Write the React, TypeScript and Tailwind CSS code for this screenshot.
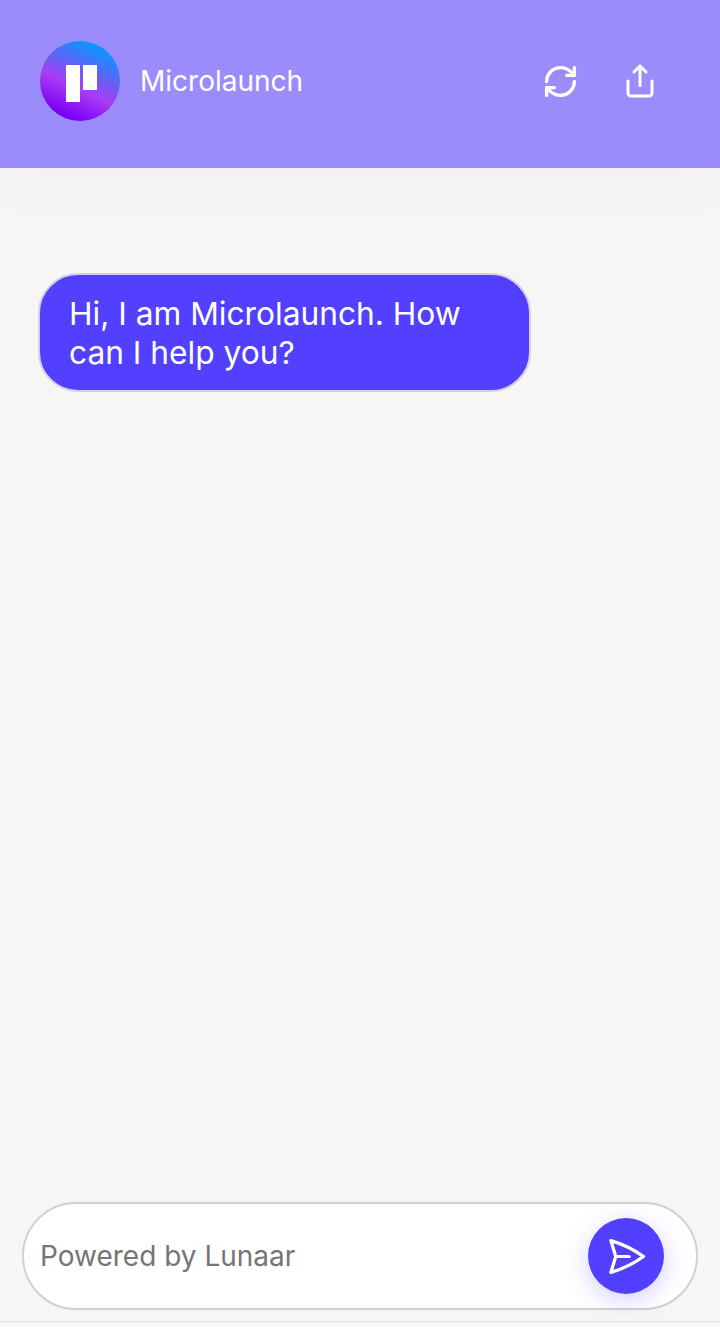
import { Share, RefreshCw } from "lucide-react";

function Logo() {
  return (
    <div className="flex h-20 w-20 shrink-0 items-start gap-[3px] rounded-full bg-[linear-gradient(205deg,#0f93ff_15%,#5568f6_35%,#a93cf4_57%,#7a00f5_85%)] pl-[26px] pt-[24px]">
      <div className="h-[37px] w-[14px] bg-white" />
      <div className="h-[25px] w-[14px] bg-white" />
    </div>
  );
}

function PlaneIcon() {
  return (
    <svg
      width="43"
      height="43"
      viewBox="0 0 24 24"
      fill="none"
      stroke="currentColor"
      strokeWidth="1.8"
      strokeLinecap="round"
      strokeLinejoin="round"
    >
      <path d="M6 12 3.269 3.125A59.769 59.769 0 0 1 21.485 12 59.768 59.768 0 0 1 3.27 20.875L5.999 12Zm0 0h7.5" />
    </svg>
  );
}

export default function App() {
  return (
    <div className="flex h-[1327px] w-[720px] flex-col overflow-hidden bg-[#f7f6f5] font-['Inter',sans-serif]">
      <header className="flex h-[168px] shrink-0 items-center justify-between bg-[#9b8cfb] pb-[6px] pl-10 pr-[60px] shadow-[0_14px_40px_rgba(155,140,251,0.06)]">
        <div className="flex items-center gap-5">
          <Logo />
          <span className="text-[28px] text-white">Microlaunch</span>
        </div>
        <div className="flex items-center gap-10 text-white">
          <button type="button" className="flex h-10 w-10 items-center justify-center">
            <RefreshCw size={37} strokeWidth={2.2} />
          </button>
          <button type="button" className="flex h-10 w-10 items-center justify-center">
            <Share size={36} strokeWidth={2} />
          </button>
        </div>
      </header>

      <main className="flex-1 pl-[38px] pt-[105px]">
        <div className="w-[493px] rounded-[40px] border-2 border-[#d4d0ec] bg-[#5340ff] pb-[18px] pl-[29px] pr-[28px] pt-[19px] text-[31.7px] leading-[39px] text-white">
          Hi, I am Microlaunch. How can I help you?
        </div>
      </main>

      <footer className="h-[125px] shrink-0">
        <div className="mx-[22px] flex h-[108px] items-center justify-between rounded-[54px] border-2 border-[#d1d1d1] bg-white pl-[16px] pr-[32px]">
          <span className="text-[28px] text-[#757575]">Powered by Lunaar</span>
          <button
            type="button"
            className="flex h-[76px] w-[76px] items-center justify-center rounded-full bg-[#5340ff] text-white shadow-[0_6px_24px_rgba(83,64,255,0.25)]"
          >
            <PlaneIcon />
          </button>
        </div>
        <div className="mt-[11px] h-px bg-[#e4e4e4]" />
      </footer>
    </div>
  );
}
